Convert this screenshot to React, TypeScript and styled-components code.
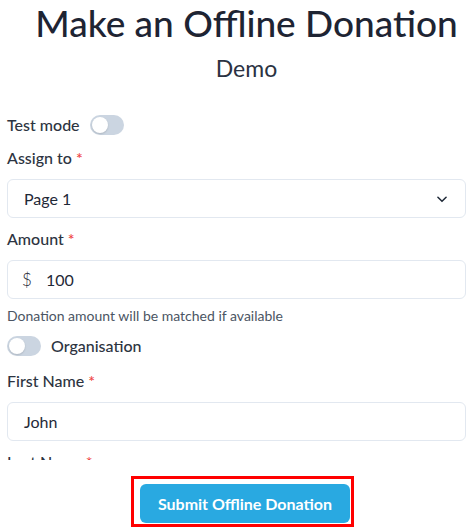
import React, { useState } from 'react';
import styled, { createGlobalStyle } from 'styled-components';

const GlobalStyle = createGlobalStyle`
  html, body {
    margin: 0;
    padding: 0;
    background: #fff;
  }
  body {
    font-family: 'Lato', 'Noto Sans', sans-serif;
    color: #1f2937;
  }
  * {
    box-sizing: border-box;
  }
`;

const Page = styled.div`
  display: flex;
  flex-direction: column;
  height: 100vh;
`;

const ScrollArea = styled.div`
  height: 460px;
  overflow: hidden;
  padding: 0 5px 0 7px;
`;

const Header = styled.div`
  text-align: center;
  padding-left: 20px;
  margin-bottom: 32px;
`;

const Title = styled.h1`
  margin: 0;
  padding-top: 2px;
  font-size: 37px;
  font-weight: 500;
  line-height: 42px;
  color: #1e2433;
  white-space: nowrap;
`;

const Subtitle = styled.h2`
  margin: 10px 0 0;
  font-size: 23px;
  font-weight: 400;
  line-height: 28px;
  color: #2b3242;
`;

const Field = styled.div`
  margin-bottom: 10px;
`;

const InlineRow = styled.div<{ $gap?: number }>`
  display: flex;
  align-items: center;
  gap: 10px;
  margin-bottom: ${(p) => p.$gap ?? 12}px;
`;

const Label = styled.label`
  display: block;
  font-size: 16px;
  font-weight: 500;
  line-height: 21px;
  color: #2d3441;
  margin-bottom: 11px;
`;

const InlineLabel = styled(Label)`
  margin-bottom: 0;
`;

const Required = styled.span`
  color: #ef4444;
  margin-left: 4px;
`;

const Track = styled.button<{ $on: boolean }>`
  position: relative;
  width: 34px;
  height: 20px;
  padding: 0;
  border: none;
  border-radius: 10px;
  cursor: pointer;
  flex-shrink: 0;
  background: ${(p) => (p.$on ? '#29a9e1' : '#cbd5e1')};
`;

const Knob = styled.span<{ $on: boolean }>`
  position: absolute;
  top: 2px;
  left: ${(p) => (p.$on ? '16px' : '2px')};
  width: 16px;
  height: 16px;
  border-radius: 50%;
  background: #fff;
  box-shadow: 0 1px 2px rgba(0, 0, 0, 0.15);
`;

const InputBox = styled.div`
  display: flex;
  align-items: center;
  height: 39px;
  border: 1px solid #e2e8f0;
  border-radius: 6px;
  background: #fff;
  padding: 0 16px;
  font-size: 16px;
  color: #1f2937;
`;

const Prefix = styled.span`
  width: 24px;
  margin-left: -2px;
  font-size: 17px;
  font-weight: 300;
`;

const Value = styled.span`
  flex: 1;
`;

const Help = styled.p`
  margin: -2px 0 10px;
  font-size: 14px;
  line-height: 18px;
  color: #4b5563;
`;

const Footer = styled.div`
  display: flex;
  justify-content: center;
  padding: 16px 0 0 14px;
`;

const Highlight = styled.div`
  border: 3px solid #ff0000;
  padding: 5px 1px 1px 6px;
`;

const SubmitButton = styled.button`
  display: block;
  width: 210px;
  height: 39px;
  border: none;
  border-radius: 6px;
  background: #29a9e1;
  color: #fff;
  font-family: 'Lato', 'Noto Sans', sans-serif;
  font-size: 16px;
  font-weight: 700;
  cursor: pointer;
`;

const Switch: React.FC<{ on: boolean; onToggle: () => void }> = ({ on, onToggle }) => (
  <Track type="button" $on={on} onClick={onToggle}>
    <Knob $on={on} />
  </Track>
);

const Chevron = () => (
  <svg width="14" height="14" viewBox="0 0 24 24" fill="none" stroke="#1f2937" strokeWidth="2.6" strokeLinecap="round" strokeLinejoin="round">
    <path d="m5 9 7 7 7-7" />
  </svg>
);

const App: React.FC = () => {
  const [testMode, setTestMode] = useState(false);
  const [organisation, setOrganisation] = useState(false);

  return (
    <Page>
      <GlobalStyle />
      <ScrollArea>
        <Header>
          <Title>Make an Offline Donation</Title>
          <Subtitle>Demo</Subtitle>
        </Header>

        <InlineRow>
          <InlineLabel>Test mode</InlineLabel>
          <Switch on={testMode} onToggle={() => setTestMode(!testMode)} />
        </InlineRow>

        <Field>
          <Label>
            Assign to<Required>*</Required>
          </Label>
          <InputBox>
            <Value>Page 1</Value>
            <Chevron />
          </InputBox>
        </Field>

        <Field>
          <Label>
            Amount<Required>*</Required>
          </Label>
          <InputBox>
            <Prefix>$</Prefix>
            <Value>100</Value>
          </InputBox>
        </Field>
        <Help>Donation amount will be matched if available</Help>

        <InlineRow $gap={14}>
          <Switch on={organisation} onToggle={() => setOrganisation(!organisation)} />
          <InlineLabel>Organisation</InlineLabel>
        </InlineRow>

        <Field>
          <Label>
            First Name<Required>*</Required>
          </Label>
          <InputBox>
            <Value>John</Value>
          </InputBox>
        </Field>

        <Field>
          <Label>
            Last Name<Required>*</Required>
          </Label>
          <InputBox>
            <Value>Smith</Value>
          </InputBox>
        </Field>
      </ScrollArea>

      <Footer>
        <Highlight>
          <SubmitButton type="button">Submit Offline Donation</SubmitButton>
        </Highlight>
      </Footer>
    </Page>
  );
};

export default App;
